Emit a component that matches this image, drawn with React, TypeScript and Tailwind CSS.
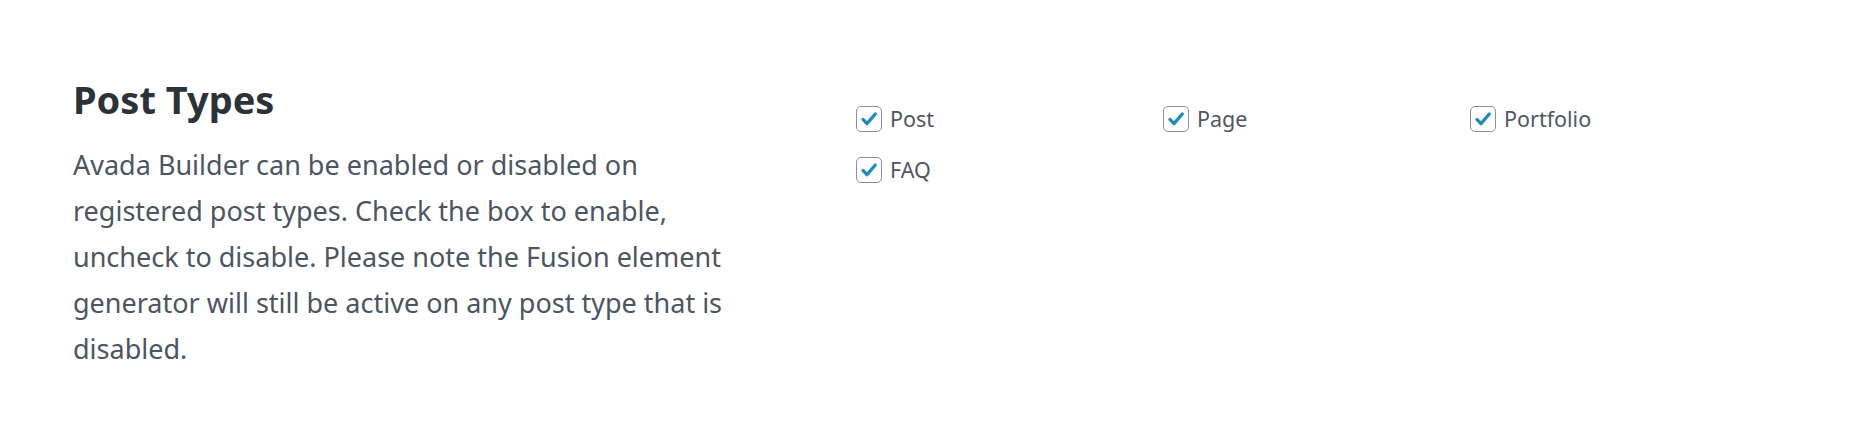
import { useState } from 'react';

const postTypes = ['Post', 'Page', 'Portfolio', 'FAQ'];

function CheckBox({ label }: { label: string }) {
  const [checked, setChecked] = useState(true);
  return (
    <label className="flex items-center gap-[8px] cursor-pointer select-none h-[26px]">
      <span
        onClick={() => setChecked(!checked)}
        className="w-[26px] h-[26px] shrink-0 rounded-[5px] border border-[#8c8f94] bg-white flex items-center justify-center"
      >
        {checked && (
          <svg viewBox="0 0 26 26" className="w-[26px] h-[26px]">
            <path d="M6.5 13.5 L10.8 18 L19.8 7.6" fill="none" stroke="#1e8cbe" strokeWidth="3.6" strokeLinecap="round" strokeLinejoin="round" />
          </svg>
        )}
      </span>
      <span className="text-[21.5px] leading-[26px] text-[#50575e]">{label}</span>
    </label>
  );
}

export default function App() {
  return (
    <div
      className="w-full h-[427px] bg-white flex pl-[73px] pt-[77px]"
      style={{ fontFamily: '"Noto Sans", "Open Sans", sans-serif' }}
    >
      {/* Left: title + description */}
      <div className="w-[700px] shrink-0">
        <h2 className="text-[38px] leading-[44px] font-bold text-[#2c3338]">Post Types</h2>
        <p className="mt-[21px] text-[27px] leading-[46px] text-[#4c5562]">
          Avada Builder can be enabled or disabled on registered post types. Check the box to enable, uncheck to disable. Please note the Fusion element generator will still be active on any post type that is disabled.
        </p>
      </div>

      {/* Right: checkboxes */}
      <div className="ml-[83px] pt-[29px]">
        <div className="grid grid-cols-[307px_307px_307px] gap-y-[25px]">
          {postTypes.map((t) => (
            <CheckBox key={t} label={t} />
          ))}
        </div>
      </div>
    </div>
  );
}
